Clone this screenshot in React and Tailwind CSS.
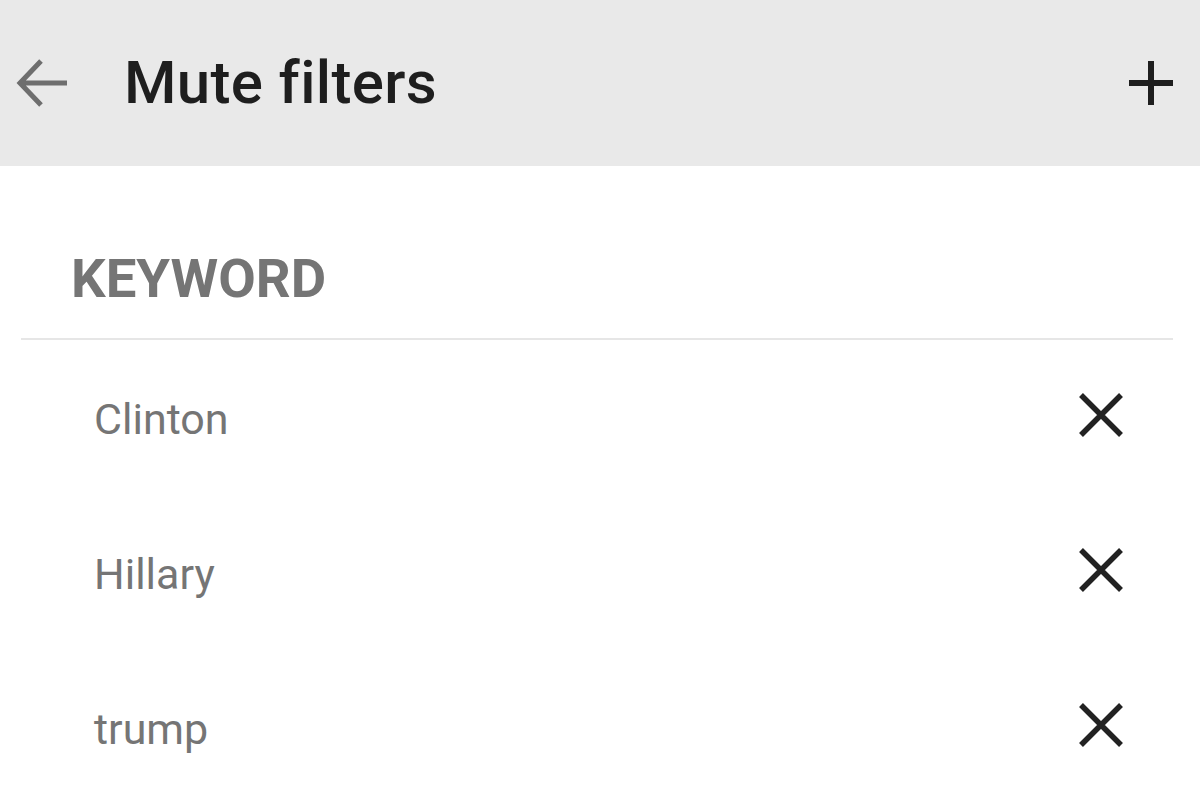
import React from "react";

const X = () => (
  <svg width="46" height="46" viewBox="0 0 46 46" fill="none" stroke="#222" strokeWidth="5.5">
    <path d="M3 3 L43 43 M43 3 L3 43" />
  </svg>
);

export default function App() {
  const items = ["Clinton", "Hillary", "trump"];
  return (
    <div className="w-[1200px] h-[789px] overflow-hidden bg-white" style={{ fontFamily: "Roboto, 'Noto Sans', sans-serif" }}>
      <div className="h-[166px] bg-[#e9e9e9] flex items-center">
        <div className="ml-[16px] w-[54px] flex items-center">
          <svg width="52" height="50" viewBox="0 0 52 50" fill="none" stroke="#6e6e6e" strokeWidth="5">
            <path d="M51 25 H5 M25 3 L4 25 L25 47" />
          </svg>
        </div>
        <div className="ml-[54px] text-[60px] leading-none font-medium text-[#1e1e1e] tracking-[0.35px]">Mute filters</div>
        <div className="ml-auto mr-[26px]">
          <svg width="46" height="46" viewBox="0 0 46 46" fill="none" stroke="#1e1e1e" strokeWidth="6">
            <path d="M23 1 V45 M1 23 H45" />
          </svg>
        </div>
      </div>
      <div className="pt-[85px] pl-[71px] text-[54.5px] leading-none font-bold text-[#757575] h-[172px]">KEYWORD</div>
      <div className="ml-[21px] mr-[27px] h-[2px] bg-[#e6e6e6]" />
      {items.map((t) => (
        <div key={t} className="h-[155px] flex items-center pl-[94px] pr-[76px]">
          <span className="text-[43px] leading-none text-[#757575] mt-[4px]">{t}</span>
          <span className="ml-auto -mt-[6px]"><X /></span>
        </div>
      ))}
    </div>
  );
}
